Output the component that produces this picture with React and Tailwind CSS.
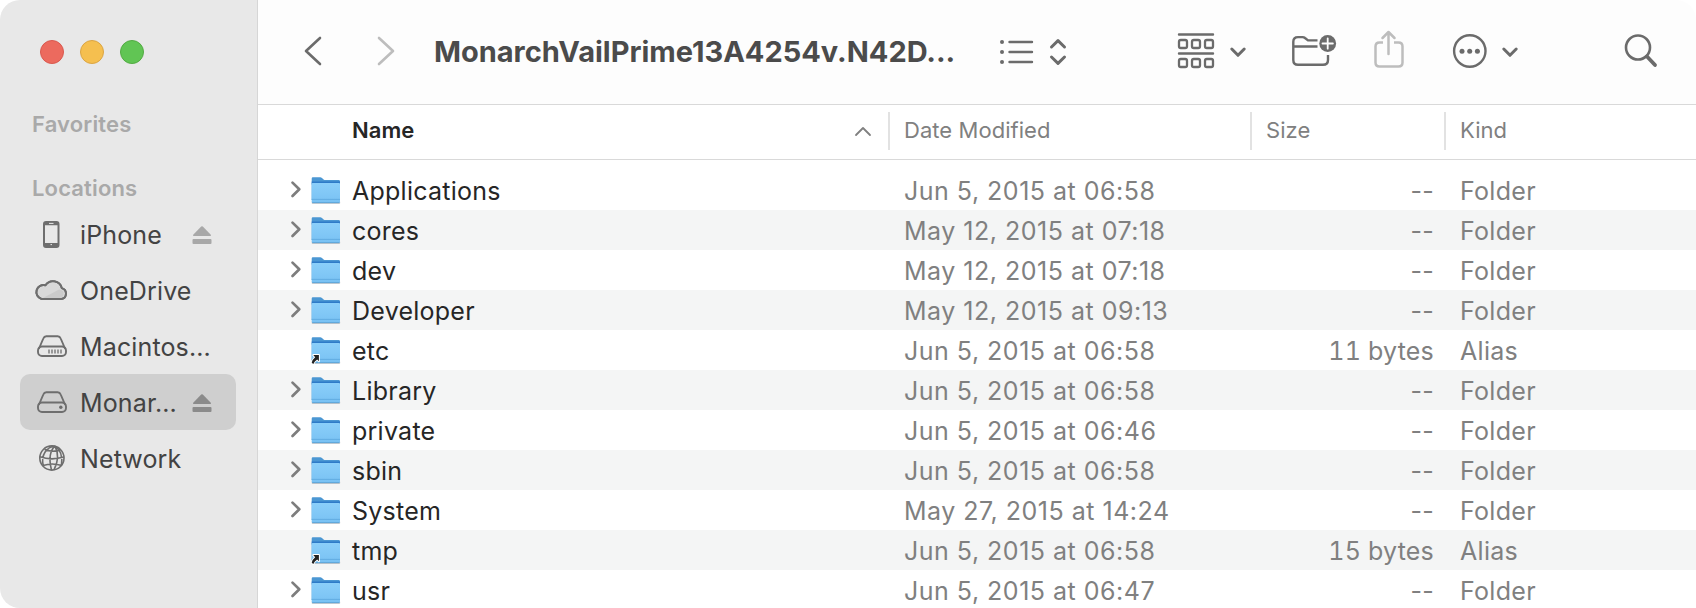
import React from "react";

function FolderIcon({ alias }) {
  return (
    <svg width="34" height="34" viewBox="-0.7 0 34 34" className="shrink-0">
      <defs>
        <linearGradient id="front" x1="0" y1="0" x2="0" y2="1">
          <stop offset="0" stopColor="#8bcffa" />
          <stop offset="1" stopColor="#78c1f3" />
        </linearGradient>
      </defs>
      <rect x="3" y="28" width="28.5" height="3" rx="1" fill="#000" opacity="0.18" />
      <path d="M3 27V5.500Q3 4.300 4.200 4.300h7.300q1 0 1.800.7l1.600 1.400q.7.7 1.800.7H30q1.300 0 1.300 1.300V27z" fill="#4b97d3" />
      <rect x="3" y="8.500" width="28.300" height="3" fill="#2e7bc8" />
      <path d="M3 10.900Q3 9.900 4 9.900h26.300q1 0 1 1V28.800q0 1.300-1.300 1.300H4.300Q3 30.100 3 28.800z" fill="url(#front)" />
      <path d="M3 26.400h28.300" stroke="#5faae0" strokeWidth="0.900" />
      <path d="M3.500 29.700h27.300" stroke="#5a9fd2" strokeWidth="0.900" />
      {alias && (
        <path
          d="M4.600 22h5.600v6.200L8.500 26.500Q5.800 28 4.600 31L3 29.800Q3.800 26.300 6.500 24.300z"
          fill="#222"
          stroke="#fff"
          strokeWidth="2"
          strokeLinejoin="round"
          paintOrder="stroke"
        />
      )}
    </svg>
  );
}

const rows = [
  ["Applications", "Jun 5, 2015 at 06:58", "--", "Folder"],
  ["cores", "May 12, 2015 at 07:18", "--", "Folder"],
  ["dev", "May 12, 2015 at 07:18", "--", "Folder"],
  ["Developer", "May 12, 2015 at 09:13", "--", "Folder"],
  ["etc", "Jun 5, 2015 at 06:58", "11 bytes", "Alias"],
  ["Library", "Jun 5, 2015 at 06:58", "--", "Folder"],
  ["private", "Jun 5, 2015 at 06:46", "--", "Folder"],
  ["sbin", "Jun 5, 2015 at 06:58", "--", "Folder"],
  ["System", "May 27, 2015 at 14:24", "--", "Folder"],
  ["tmp", "Jun 5, 2015 at 06:58", "15 bytes", "Alias"],
  ["usr", "Jun 5, 2015 at 06:47", "--", "Folder"],
];

function Eject({ color }) {
  return (
    <svg width="20" height="20" viewBox="0 0 20 20" className="shrink-0" fill={color}>
      <path d="M9.200 1.500q.8-.7 1.600 0l8 8.300q.7 1.200-.6 1.200H1.800q-1.300 0-.6-1.200z" />
      <rect x="0.500" y="14" width="19" height="5" rx="1" />
    </svg>
  );
}

const icons = {
  phone: (
    <g>
      <rect x="12" y="3" width="14.500" height="25" rx="2" strokeWidth="2" />
      <path d="M12 4.800h14.500M12 25.500h14.500" strokeWidth="2.800" />
      <path d="M17 4.400h4.500M18.500 25.600h1.500" stroke="#e8e8e8" strokeWidth="1" />
    </g>
  ),
  cloud: (
    <g>
      <path d="M9.500 24h20A5.600 5.600 0 0 0 29.800 13.100a9 9 0 0 0-16.300-2.800A7 7 0 0 0 9.500 24z" fill="#d9d9d9" />
      <path d="M11 23l16-8.500q5.500.5 4.500 5-1 3.500-4 3.500z" fill="#cbcbcb" stroke="none" />
      <path d="M9.500 24h20A5.600 5.600 0 0 0 29.800 13.100a9 9 0 0 0-16.300-2.800A7 7 0 0 0 9.500 24z" strokeWidth="2" />
    </g>
  ),
  internal: (
    <g>
      <path d="M6.800 18 11.300 7.500q.9-2.300 3-2.300h11.400q2.100 0 3 2.300L33.200 18" />
      <rect x="6" y="15.500" width="28" height="9.500" rx="4" />
      <path d="M17 18.400v4M20 18.400v4M23 18.400v4M26 18.400v4M29 18.400v4" strokeWidth="1.300" />
    </g>
  ),
  external: (
    <g>
      <path d="M6.800 18 11.300 7.500q.9-2.300 3-2.300h11.400q2.100 0 3 2.300L33.200 18" />
      <rect x="6" y="15.500" width="28" height="9.500" rx="4" />
      <circle cx="28.800" cy="20.300" r="1.700" fill="#6b6b6b" stroke="none" />
    </g>
  ),
  globe: (
    <g strokeWidth="1.600">
      <circle cx="19.900" cy="15" r="12.100" />
      <path d="M23 3.200C18.500 7.300 16.500 15.300 19.500 27M23 3.200c3.500 7 3 16-1 23.600M23 3.200C15 3.800 8.500 11.300 11.300 23.100M23 3.200c4.500 2.900 8 8.900 6.500 19.400M12.500 6.300q7 3.500 16 .5M8 13.800q11 4 24 .3M11 22.600q9-3.300 19 0" />
    </g>
  ),
};

function SideItem({ icon, label, eject, selected }) {
  return (
    <div className={"ml-5 flex h-14 w-[216px] items-center rounded-[10px] " + (selected ? "bg-[#cfcfcf]" : "")}>
      <svg width="40" height="30" viewBox="0 0 40 30" fill="none" stroke="#6e6e6e" strokeWidth="1.900" strokeLinejoin="round" className="ml-[12px] shrink-0">
        {icons[icon]}
      </svg>
      <span className="ml-2 flex-1 whitespace-nowrap pt-0.5 text-[25px] leading-[30px] tracking-[0.13px] text-[#434343]">{label}</span>
      {eject && (
        <span className="mr-6 pt-0.5">
          <Eject color={selected ? "#8b8b8b" : "#a8a8a8"} />
        </span>
      )}
    </div>
  );
}

function Chevron() {
  return (
    <svg width="20" height="14" viewBox="0 0 20 14" fill="none" stroke="#6b6b6b" strokeWidth="3" strokeLinecap="round" strokeLinejoin="round" className="shrink-0">
      <path d="M3.800 4 10 10.300 16.200 4" />
    </svg>
  );
}

export default function App() {
  return (
    <div className="flex h-[608px] w-[1696px] overflow-hidden bg-white font-['Inter',sans-serif]">
      <aside className="flex h-full w-[258px] shrink-0 flex-col rounded-l-[20px] border-r border-[#d6d6d6] bg-[#e8e8e8]">
        <div className="ml-10 mt-10 flex gap-4">
          <div className="size-6 rounded-full border border-[#d9594f] bg-[#ec6a5e]" />
          <div className="size-6 rounded-full border border-[#dba544] bg-[#f5bf4f]" />
          <div className="size-6 rounded-full border border-[#53ab43] bg-[#61c554]" />
        </div>
        <div className="ml-8 mt-[46px] h-7 text-[22px] font-semibold leading-7 tracking-[0.15px] text-[#a9a9a9]">Favorites</div>
        <div className="mb-1 ml-8 mt-9 h-7 text-[22px] font-semibold leading-7 tracking-[0.15px] text-[#a9a9a9]">Locations</div>
        <SideItem icon="phone" label="iPhone" eject />
        <SideItem icon="cloud" label="OneDrive" />
        <SideItem icon="internal" label="Macintos..." />
        <SideItem icon="external" label="Monar..." eject selected />
        <SideItem icon="globe" label="Network" />
      </aside>

      <main className="flex min-w-0 flex-1 flex-col">
        <header className="flex h-[105px] shrink-0 items-center rounded-tr-[20px] border-b border-[#d9d9d9] bg-[#fdfdfd] pb-0.5">
          <svg width="100" height="40" viewBox="300 31 100 40" fill="none" strokeWidth="2.600" strokeLinecap="round" strokeLinejoin="round" className="ml-[42px] shrink-0">
            <path d="M320 38 306 51 320 64" stroke="#6b6b6b" />
            <path d="M379 38 393 51 379 64" stroke="#bdbdbd" />
          </svg>
          <h1 className="ml-[34px] w-[564px] shrink-0 whitespace-nowrap pt-0.5 text-[29px] font-bold leading-9 tracking-[-0.02px] text-[#4b4b4b]">MonarchVailPrime13A4254v.N42D...</h1>
          <svg width="70" height="40" viewBox="998 31 70 40" fill="none" stroke="#6b6b6b" strokeLinecap="round" strokeLinejoin="round" className="shrink-0">
            <path d="M1009.500 42h22.500M1009.500 52h22.500M1009.500 62h22.500" strokeWidth="2.400" />
            <path d="M1002 42h.01M1002 52h.01M1002 62h.01" strokeWidth="4" />
            <path d="M1051.500 47 1058 40.700 1064.500 47M1051.500 57 1058 63.300 1064.500 57" strokeWidth="3" />
          </svg>
          <svg width="40" height="40" viewBox="1176 31 40 40" fill="none" stroke="#6b6b6b" strokeWidth="2.300" strokeLinecap="round" className="ml-[108px] shrink-0">
            <path d="M1179 34.500h34M1179 53.500h34" strokeWidth="2.400" />
            <rect x="1179" y="40" width="8" height="8" rx="1.800" />
            <rect x="1192" y="40" width="8" height="8" rx="1.800" />
            <rect x="1205" y="40" width="8" height="8" rx="1.800" />
            <rect x="1179" y="59" width="8" height="8" rx="1.800" />
            <rect x="1192" y="59" width="8" height="8" rx="1.800" />
            <rect x="1205" y="59" width="8" height="8" rx="1.800" />
          </svg>
          <span className="ml-3 pt-0.5"><Chevron /></span>
          <svg width="50" height="40" viewBox="1290 31 50 40" fill="none" stroke="#6b6b6b" strokeWidth="2.400" strokeLinecap="round" strokeLinejoin="round" className="ml-[42px] shrink-0">
            <path d="M1317.500 40.400h-9.500l-3-2.400q-1-.9-2.500-.9h-4.500q-4.700 0-4.700 4.700v18.200q0 4.800 4.700 4.800h25q5 0 5-4.800v-5M1293.500 46.500h24" strokeLinecap="butt" />
            <circle cx="1327.700" cy="43.500" r="8.400" fill="#6b6b6b" stroke="none" />
            <path d="M1322.500 43.500h10.400M1327.700 38.300v10.400" stroke="#fdfdfd" strokeWidth="1.800" />
          </svg>
          <svg width="34" height="44" viewBox="1372 29 34 44" fill="none" stroke="#bdbdbd" strokeWidth="2.500" strokeLinecap="round" strokeLinejoin="round" className="ml-8 shrink-0">
            <path d="M1383 42.500h-3.500q-4 0-4 4v16q0 4 4 4h19q4 0 4-4v-16q0-4-4-4H1394" strokeLinecap="butt" />
            <path d="M1388.500 54V32.500M1382.500 38l6-6 6 6" />
          </svg>
          <svg width="40" height="40" viewBox="1450 31 40 40" fill="none" stroke="#6b6b6b" strokeWidth="2.400" className="ml-[44px] shrink-0">
            <circle cx="1469.800" cy="51" r="15.700" />
            <g fill="#6b6b6b" stroke="none">
              <circle cx="1462" cy="51.300" r="2.500" />
              <circle cx="1469.700" cy="51.300" r="2.500" />
              <circle cx="1477.400" cy="51.300" r="2.500" />
            </g>
          </svg>
          <span className="ml-[10px] pt-0.5"><Chevron /></span>
          <svg width="40" height="40" viewBox="1620 31 40 40" fill="none" stroke="#6b6b6b" strokeWidth="2.600" strokeLinecap="round" className="ml-[100px] shrink-0">
            <circle cx="1638" cy="47.500" r="12" />
            <path d="M1647 56.500 1655 65" strokeWidth="3.800" />
          </svg>
        </header>

        <div className="flex h-[55px] shrink-0 items-center border-b border-[#d9d9d9] bg-white pb-0.5 text-[22px] leading-7 tracking-[0.05px] text-[#808080]">
          <div className="flex w-[630px] shrink-0 items-center pl-[94px] pr-4">
            <span className="flex-1 pb-0.5 font-semibold text-[#262626]">Name</span>
            <svg width="18" height="12" viewBox="0 0 18 12" fill="none" stroke="#808080" strokeWidth="1.800" strokeLinecap="round" strokeLinejoin="round">
              <path d="M2 10 9 3l7 7" />
            </svg>
          </div>
          <div className="flex h-[38px] w-[362px] shrink-0 items-center border-l-2 border-[#e2e2e2] pb-0.5 pl-[14px]">Date Modified</div>
          <div className="flex h-[38px] w-[194px] shrink-0 items-center border-l-2 border-[#e2e2e2] pb-0.5 pl-[14px]">Size</div>
          <div className="flex h-[38px] flex-1 items-center border-l-2 border-[#e2e2e2] pb-0.5 pl-[14px]">Kind</div>
        </div>

        <div className="flex-1 overflow-hidden pt-[10px]">
          {rows.map(([name, date, size, kind]) => (
            <div key={name} className="flex h-10 items-center text-[25px] leading-[30px] text-[#808080] even:bg-[#f4f5f5]">
              <div className="flex w-[646px] shrink-0 items-center">
                <svg width="14" height="20" viewBox="0 0 14 20" fill="none" stroke="#7d7d7d" strokeWidth="2.700" strokeLinecap="round" strokeLinejoin="round" className="ml-[31px] shrink-0">
                  {kind === "Folder" && <path d="M3.500 2.600 10.300 9.300 3.500 16" />}
                </svg>
                <span className="ml-[5px]"><FolderIcon alias={kind === "Alias"} /></span>
                <span className="ml-[10px] whitespace-nowrap pt-0.5 tracking-[0.25px] text-[#262626]">{name}</span>
              </div>
              <div className="w-[360px] shrink-0 whitespace-nowrap pt-0.5 tracking-[0.5px]">{date}</div>
              <div className={"w-[170px] shrink-0 whitespace-nowrap pt-0.5 text-right tracking-[0.2px] " + (kind === "Alias" ? "tabular-nums" : "")}>{size}</div>
              <div className="ml-[26px] pt-0.5 tracking-[0.3px]">{kind}</div>
            </div>
          ))}
        </div>
      </main>
    </div>
  );
}
